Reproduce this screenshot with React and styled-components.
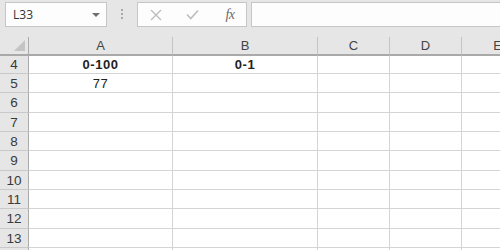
import React from "react";
import styled, { createGlobalStyle } from "styled-components";

const GlobalStyle = createGlobalStyle`
  html, body {
    margin: 0;
    padding: 0;
    background: #ffffff;
    overflow: hidden;
  }
  * {
    box-sizing: border-box;
  }
`;

const Window = styled.div`
  width: 500px;
  height: 250px;
  overflow: hidden;
  background: #ffffff;
  font-family: "Open Sans", "Liberation Sans", sans-serif;
`;

const Toolbar = styled.div`
  height: 37px;
  background: #e6e6e6;
  display: flex;
  align-items: flex-start;
  padding-top: 2px;
  padding-left: 5px;
`;

const Box = styled.div`
  height: 25px;
  background: #fdfdfd;
  border: 1px solid #c6c6c6;
  display: flex;
  align-items: center;
  width: ${(p) => p.$width};
  flex: ${(p) => (p.$grow ? "1" : "none")};
  margin-left: ${(p) => p.$gap || "0px"};
  margin-right: ${(p) => (p.$grow ? "-2px" : "0px")};
`;

const NameText = styled.span`
  font-size: 12px;
  color: #333333;
  padding-left: 7px;
  flex: 1;
`;

const Caret = styled.span`
  width: 0;
  height: 0;
  border-left: 4px solid transparent;
  border-right: 4px solid transparent;
  border-top: 4px solid #6f6f6f;
  margin-right: 6px;
  margin-top: 1px;
`;

const Dots = styled.div`
  width: 3px;
  margin-left: 14px;
  margin-top: 7px;
  display: flex;
  flex-direction: column;
  gap: 2px;
  span {
    width: 2px;
    height: 2px;
    background: #a8a8a8;
  }
`;

const IconSlot = styled.span`
  width: 36px;
  display: flex;
  justify-content: center;
  align-items: center;
`;

const Fx = styled.span`
  font-family: "Liberation Serif", serif;
  font-style: italic;
  font-size: 14px;
  color: #6a6a6a;
  letter-spacing: -0.5px;
  margin-left: 4px;
`;

const Sheet = styled.div`
  display: grid;
  width: 534px;
  grid-template-columns: 29px 144px 145px 72px 72px 72px;
`;

const HeadCell = styled.div`
  height: 19px;
  background: #e6e6e6;
  border-bottom: 2px solid #a9a9a9;
  border-right: 1px solid ${(p) => (p.$corner ? "#ababab" : "#c4c4c4")};
  display: flex;
  align-items: center;
  justify-content: center;
  font-family: "Liberation Sans", sans-serif;
  font-size: 13px;
  color: #444444;
  position: relative;
`;

const Corner = styled.span`
  position: absolute;
  right: 3px;
  bottom: 3px;
  width: 0;
  height: 0;
  border-left: 11px solid transparent;
  border-bottom: 11px solid #c4c4c4;
`;

const RowNum = styled.div`
  height: ${(p) => p.$h}px;
  background: #e6e6e6;
  border-right: 1px solid #ababab;
  border-bottom: 1px solid #c9c9c9;
  display: flex;
  align-items: center;
  justify-content: center;
  font-family: "Liberation Sans", sans-serif;
  font-size: 13.5px;
  color: #3a3a3a;
`;

const Cell = styled.div`
  height: ${(p) => p.$h}px;
  border-right: 1px solid #d4d4d4;
  border-bottom: 1px solid #d4d4d4;
  display: flex;
  align-items: center;
  justify-content: center;
  font-family: "Liberation Sans", sans-serif;
  font-size: 13px;
  letter-spacing: 0.6px;
  font-weight: ${(p) => (p.$bold ? 700 : 400)};
  color: #222222;
  white-space: nowrap;
`;

const columns = ["A", "B", "C", "D", "E"];
const heights = [18, 19, 20, 19, 19, 20, 19, 19, 20, 19, 19];
const rows = [
  { n: 4, cells: [{ t: "0-100", b: true }, { t: "0-1", b: true }] },
  { n: 5, cells: [{ t: "77" }] },
  { n: 6 },
  { n: 7 },
  { n: 8 },
  { n: 9 },
  { n: 10 },
  { n: 11 },
  { n: 12 },
  { n: 13 },
  { n: 14, hidden: true },
];

export default function App() {
  return (
    <Window>
      <GlobalStyle />
      <Toolbar>
        <Box $width="102px">
          <NameText>L33</NameText>
          <Caret />
        </Box>
        <Dots>
          <span />
          <span />
          <span />
        </Dots>
        <Box $width="110px" $gap="13px">
          <IconSlot>
            <svg width="12" height="12" viewBox="0 0 12 12">
              <path d="M1 1 L11 11 M11 1 L1 11" stroke="#bdbdbd" strokeWidth="1.4" fill="none" />
            </svg>
          </IconSlot>
          <IconSlot>
            <svg width="13" height="11" viewBox="0 0 13 11">
              <path d="M1 5.5 L4.8 9.5 L12 1.5" stroke="#bdbdbd" strokeWidth="1.6" fill="none" />
            </svg>
          </IconSlot>
          <IconSlot>
            <Fx>fx</Fx>
          </IconSlot>
        </Box>
        <Box $grow $gap="4px" />
      </Toolbar>
      <Sheet>
        <HeadCell $corner>
          <Corner />
        </HeadCell>
        {columns.map((c) => (
          <HeadCell key={c}>{c}</HeadCell>
        ))}
        {rows.map((r, i) =>
          [
            <RowNum key={"n" + r.n} $h={heights[i]}>
              {r.hidden ? "" : r.n}
            </RowNum>,
          ].concat(
            columns.map((c, j) => {
              const cell = r.cells && r.cells[j];
              return (
                <Cell key={r.n + c} $h={heights[i]} $bold={cell && cell.b}>
                  {cell ? cell.t : ""}
                </Cell>
              );
            })
          )
        )}
      </Sheet>
    </Window>
  );
}
